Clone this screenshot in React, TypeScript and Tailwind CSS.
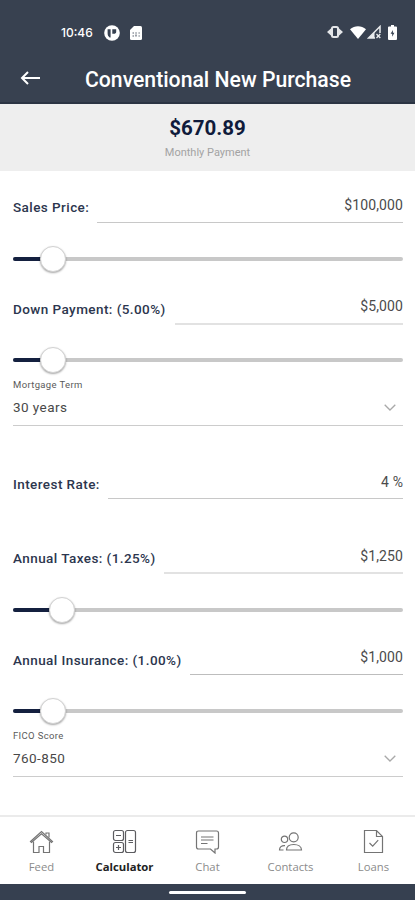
import React from 'react';
import { clsx } from 'clsx';

interface FieldProps {
  label: string;
  value: string;
  className: string;
  labelClass: string;
  lineClass: string;
}

function Field({ label, value, className, labelClass, lineClass }: FieldProps) {
  return (
    <div className={clsx('flex items-end', className)}>
      <label
        className={clsx(
          'shrink-0 whitespace-nowrap text-[13.5px] leading-4 font-medium tracking-[0.43px] text-[#2c364e]',
          labelClass
        )}
      >
        {label}
      </label>
      <div
        className={clsx(
          'flex-1 text-right text-[14px] leading-4 tracking-[0.1px] text-[#4b4b4b]',
          lineClass
        )}
      >
        {value}
      </div>
    </div>
  );
}

function Slider({ percent, className }: { percent: number; className: string }) {
  return (
    <div className={clsx('relative flex h-[26px] items-center', className)}>
      <div className="h-1 w-full overflow-hidden rounded-full bg-[#c8c8c8]">
        <div className="h-full bg-[#14203f]" style={{ width: `${percent}%` }} />
      </div>
      <div
        className="absolute top-0 size-[26px] -translate-x-1/2 rounded-full border border-[#d2d2d2] bg-white shadow-[0_1px_2px_rgba(0,0,0,0.35)]"
        style={{ left: `${percent}%` }}
      />
    </div>
  );
}

function Select({ label, value }: { label: string; value: string }) {
  return (
    <div className="flex h-[53px] flex-col border-b border-[#cccccc] pt-[6px]">
      <span className="text-[9.5px] leading-3 tracking-[0.35px] text-[#5a5a5a]">{label}</span>
      <div className="mt-[8px] flex items-center justify-between pr-[7px] leading-4 text-[#484848]">
        <span className="text-[13.5px] tracking-[0.45px]">{value}</span>
        <svg
          className="h-[7px] w-[12px]"
          viewBox="0 0 12 7"
          fill="none"
          stroke="#a9a9a9"
          strokeWidth="1.3"
        >
          <path d="M0.7 0.7 6 6 11.3 0.7" />
        </svg>
      </div>
    </div>
  );
}

function StatusBar() {
  return (
    <div className="flex h-[54px] items-end justify-between pr-[18px] pl-[61px] pb-[13px] text-white">
      <div className="flex h-4 items-center">
        <span className="w-[43px] font-[Inter] text-[12px] leading-4 font-medium">10:46</span>
        <svg className="h-4 w-4" viewBox="0 0 16 16">
          <circle cx="8" cy="8" r="7.8" fill="#fff" />
          <path d="M3.6 4.2h3v8.2h-1c-1.4-1-2-2.4-2-4.2zM8.3 4.2h3.9v2.5c0 1.3-1 2.1-2.2 2.1H8.3z" fill="#364050" />
        </svg>
        <svg className="ml-[10px] h-[14px] w-[12px]" viewBox="0 0 12 14">
          <path d="M4 0h6.5Q12 0 12 1.5v11Q12 14 10.5 14h-9Q0 14 0 12.5V4z" fill="#fff" />
          <path d="M2.5 7h1.5M5.3 7h1.5M8.5 7h1.3M2.5 10h1.5M6 8.5v2M8.5 10h1.3" stroke="#59616e" strokeWidth="1.2" />
        </svg>
      </div>
      <div className="flex h-[18px] items-center">
        <svg className="h-[12px] w-4" viewBox="0 0 16 12">
          <path d="M5 1.5 0 6l5 4.5zM11 1.5 16 6l-5 4.5z" fill="#e4e6e9" />
          <rect x="5" y="1" width="6" height="10" rx="1.5" fill="#364050" stroke="#e4e6e9" strokeWidth="2" />
        </svg>
        <svg className="ml-[7px] h-[13px] w-[16px]" viewBox="0 0 16 13">
          <path d="M0 3.2C4.6-.8 11.4-.8 16 3.2L8 13z" fill="#fff" />
        </svg>
        <svg className="ml-[1px] h-[14px] w-[14px]" viewBox="0 0 14 14" fill="none" stroke="#e9ebed">
          <path d="M13 8V1.5L1.5 13H8" strokeWidth="1.5" />
          <path d="M7.5 7v6H2z" fill="#e9ebed" stroke="none" />
          <path d="m9.5 9 3.8 4M13.3 9l-3.8 4" strokeWidth="1.3" />
        </svg>
        <svg className="ml-[7px] h-[15px] w-[9px]" viewBox="0 0 9 15">
          <path d="M3 0h3v1.5h2q1 0 1 1V14q0 1-1 1H1q-1 0-1-1V2.5q0-1 1-1h2z" fill="#fff" />
          <path d="M4.9 5 2.6 8.7h1.6v3.1l2.2-4H4.9z" fill="#364050" />
        </svg>
      </div>
    </div>
  );
}

const icons = {
  feed: (
    <>
      <path d="M1 12 12 2l11 10-1 1L12 4.2 2 13z" />
      <path d="M4 12v11h5.5v-6H14v6h6V12M16.5 5V3.5h3V8" />
    </>
  ),
  calculator: (
    <>
      <rect x="1" y="1" width="10" height="10" rx="2" />
      <rect x="1" y="13" width="10" height="10" rx="2" />
      <rect x="13" y="1" width="10" height="22" rx="2" />
      <path d="M3.5 6h5M3.5 18h5M6 15.5v5M16 11h4.5M16 13h4.5" />
    </>
  ),
  chat: (
    <>
      <path d="M3 1.5h18q2 0 2 2v14q0 2-2 2h-1.5v4l-4.5-4H3q-2 0-2-2v-14q0-2 2-2z" />
      <path d="M5.5 7.5H18M5.5 10.5H18M5.5 14H12" />
    </>
  ),
  contacts: (
    <>
      <circle cx="15.2" cy="7.8" r="4.5" />
      <circle cx="6" cy="9.8" r="3.2" />
      <path d="M8 20.5c0-3.5 3-5.5 7.3-5.5s7.7 2 7.7 5.5zM6.5 16.2C3 16 1 17.5 1 20.5h4" />
    </>
  ),
  loans: (
    <>
      <path d="M3 1h12l6 6v16H3zM15 1v6h6" />
      <path d="m8 13.5 3.2 3.2 5.5-6" />
    </>
  ),
};

const tabs = [
  { label: 'Feed', icon: icons.feed },
  { label: 'Calculator', icon: icons.calculator, active: true },
  { label: 'Chat', icon: icons.chat },
  { label: 'Contacts', icon: icons.contacts },
  { label: 'Loans', icon: icons.loans },
];

export default function App() {
  return (
    <div className="flex h-[900px] w-[415px] flex-col overflow-hidden bg-white font-[Roboto,sans-serif]">
      <header className="h-[104px] shrink-0 border-b-2 border-[#2b3443] bg-[#384150]">
        <StatusBar />
        <div className="flex h-[48px] items-center pl-[20px]">
          <svg className="h-[14px] w-[21px]" viewBox="0 0 21 14" fill="none" stroke="#fff" strokeWidth="2">
            <path d="M8 1 2 7l6 6M2 7h18" />
          </svg>
          <h1 className="mt-[3px] ml-[44px] whitespace-nowrap text-[21.2px] leading-7 font-medium text-white">
            Conventional New Purchase
          </h1>
        </div>
      </header>

      <section className="flex h-[67px] shrink-0 flex-col items-center bg-[#eeeeee] pt-[12px]">
        <div className="text-[20.5px] leading-6 font-bold text-[#101b3b]">$670.89</div>
        <div className="mt-[5px] text-[11px] leading-4 text-[#a3a3a3]">Monthly Payment</div>
      </section>

      <main className="flex flex-1 flex-col pl-[13px] pr-[12px]">
        <Field
          label="Sales Price:"
          value="$100,000"
          className="h-[52px]"
          labelClass="w-[84px] pb-[8px]"
          lineClass="border-b border-[#c8c8c8] pb-[9px]"
        />
        <Slider percent={10.2} className="mt-[23px]" />
        <Field
          label="Down Payment: (5.00%)"
          value="$5,000"
          className="h-[53px]"
          labelClass="w-[162px] pb-[8px]"
          lineClass="border-b-2 border-[#e2e2e2] pb-[9px]"
        />
        <Slider percent={10.2} className="mt-[22px]" />
        <Select label="Mortgage Term" value="30 years" />
        <Field
          label="Interest Rate:"
          value="4 %"
          className="h-[73px]"
          labelClass="w-[95px] pb-[7px]"
          lineClass="border-b border-[#c8c8c8] pb-[8px]"
        />
        <Field
          label="Annual Taxes: (1.25%)"
          value="$1,250"
          className="h-[75px]"
          labelClass="w-[151px] pb-[8px]"
          lineClass="border-b-2 border-[#e2e2e2] pb-[8px]"
        />
        <Slider percent={12.5} className="mt-[23px]" />
        <Field
          label="Annual Insurance: (1.00%)"
          value="$1,000"
          className="h-[52px]"
          labelClass="w-[177px] pb-[7px]"
          lineClass="border-b border-[#bdbdbd] pb-[9px]"
        />
        <Slider percent={10.2} className="mt-[23px]" />
        <Select label="FICO Score" value="760-850" />
      </main>

      <nav className="grid h-[69px] shrink-0 grid-cols-5 border-t-2 border-[#ebebeb] font-['Open_Sans',sans-serif]">
        {tabs.map((tab) => (
          <div key={tab.label} className="flex flex-col items-center pt-[12px]">
            <svg
              className="size-[25px]"
              viewBox="-0.5 -0.5 25 25"
              fill="none"
              stroke={tab.active ? '#5c5c60' : '#747474'}
              strokeWidth="1.2"
            >
              {tab.icon}
            </svg>
            <span
              className={clsx(
                'mt-[5px] text-[11.3px] leading-4',
                tab.active ? 'font-bold text-[#222222]' : 'text-[#8b8b8b]'
              )}
            >
              {tab.label}
            </span>
          </div>
        ))}
      </nav>
      <div className="flex h-[16px] shrink-0 justify-center bg-[#364050] pt-[7px]">
        <div className="h-[3px] w-[77px] rounded-full bg-white" />
      </div>
    </div>
  );
}
